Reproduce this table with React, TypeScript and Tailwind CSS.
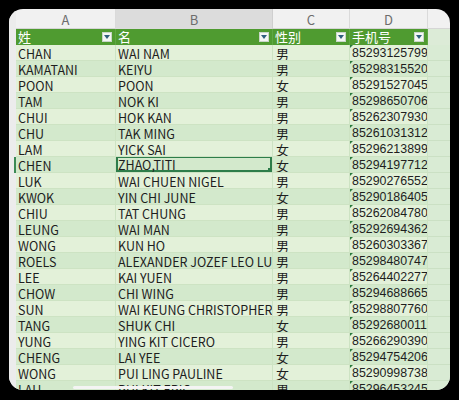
const rows: [string, string, string, string][] = [
  ["CHAN", "WAI NAM", "男", "85293125799"],
  ["KAMATANI", "KEIYU", "男", "85298315520"],
  ["POON", "POON", "女", "85291527045"],
  ["TAM", "NOK KI", "男", "85298650706"],
  ["CHUI", "HOK KAN", "男", "85262307930"],
  ["CHU", "TAK MING", "男", "85261031312"],
  ["LAM", "YICK SAI", "女", "85296213899"],
  ["CHEN", "ZHAO,TITI", "女", "85294197712"],
  ["LUK", "WAI CHUEN NIGEL", "男", "85290276552"],
  ["KWOK", "YIN CHI JUNE", "女", "85290186405"],
  ["CHIU", "TAT CHUNG", "男", "85262084780"],
  ["LEUNG", "WAI MAN", "男", "85292694362"],
  ["WONG", "KUN HO", "男", "85260303367"],
  ["ROELS", "ALEXANDER JOZEF LEO LUC", "男", "85298480747"],
  ["LEE", "KAI YUEN", "男", "85264402277"],
  ["CHOW", "CHI WING", "男", "85294688665"],
  ["SUN", "WAI KEUNG CHRISTOPHER", "男", "85298807760"],
  ["TANG", "SHUK CHI", "女", "85292680011"],
  ["YUNG", "YING KIT CICERO", "男", "85266290390"],
  ["CHENG", "LAI YEE", "女", "85294754206"],
  ["WONG", "PUI LING PAULINE", "女", "85290998738"],
  ["LAU", "PUI KIT ERIC", "男", "85296453245"],
];

const cols = "grid grid-cols-[7px_100px_157px_77px_78px_1fr]";

function FilterBtn() {
  return (
    <span className="absolute right-[3px] top-[3px] w-[10px] h-[10px] bg-[#f4f7f4] border border-[#c9d6c9] flex items-center justify-center">
      <span className="w-0 h-0 border-l-[3px] border-r-[3px] border-t-[4px] border-l-transparent border-r-transparent border-t-[#2f5f7d]" />
    </span>
  );
}

function HeadCell({ label }: { label: string }) {
  return (
    <div className="relative bg-[#4f9b30] text-white text-[13px] leading-[16px] pl-[2px] border-r border-[#5ea843] overflow-hidden">
      {label}
      <FilterBtn />
    </div>
  );
}

export default function App() {
  return (
    <div
      className="w-[459px] h-[400px] bg-black pt-[9px] pl-[9px]"
      style={{ fontFamily: '"Noto Sans CJK SC", "Liberation Sans", sans-serif' }}
    >
      <div className="relative w-[441px] h-[381px] rounded-[14px] overflow-hidden bg-[#f1f1f1]">
        {/* column letters */}
        <div className={`${cols} grid-rows-[20px] h-[20px] text-[13px] leading-[20px] text-[#6d6d6d] border-b border-[#d6d6d6]`}>
          <div className="bg-[#ececec]" />
          <div className="text-center pt-px border-r border-[#dadada]">A</div>
          <div className="text-center pt-px bg-[#dcdcdc] border-r border-[#cfcfcf]">B</div>
          <div className="text-center pt-px border-r border-[#dadada]">C</div>
          <div className="text-center pt-px border-r border-[#dadada]">D</div>
          <div />
        </div>

        {/* table header */}
        <div className={`${cols} grid-rows-[16px] h-[16px]`}>
          <div className="bg-[#ececec]" />
          <HeadCell label="姓" />
          <HeadCell label="名" />
          <HeadCell label="性别" />
          <HeadCell label="手机号" />
          <div className="bg-[#dcebd7]" />
        </div>

        {rows.map((r, i) => {
          const bg = i % 2 === 0 ? "bg-[#e3f1d9]" : "bg-[#d3e9cc]";
          const sel = i === 7;
          return (
            <div key={i} className={`${cols} grid-rows-[16px] h-[16px] text-[12.5px] leading-[15px] text-[#1e1e1e]`}>
              <div className="relative bg-[#ececec]">
                {sel && <span className="absolute right-0 top-0 bottom-0 w-[2px] bg-[#3c8a55]" />}
              </div>
              <div className={`${bg} pl-[2px] pt-px border-b border-r border-[#cde3c3] whitespace-nowrap overflow-hidden`}>{r[0]}</div>
              <div className={`relative ${bg} pl-[2px] ${sel ? "pt-0" : "pt-px"} border-b border-r border-[#cde3c3] whitespace-nowrap overflow-hidden`}>
                {sel && (
                  <>
                    <span className="absolute -top-px left-0 right-0 bottom-0 border-2 border-[#2e7d4a]" />
                    <span className="absolute right-0 bottom-0 w-[4px] h-[4px] bg-[#2e7d4a]" />
                  </>
                )}
                <span className="relative">{r[1]}</span>
              </div>
              <div className={`${bg} pl-[3px] pt-px text-[13px] border-b border-r border-[#cde3c3] overflow-hidden`}>{r[2]}</div>
              <div className={`relative ${bg} pl-[2px] pt-px text-[12.4px] font-['Liberation_Sans',sans-serif] border-b border-r border-[#cde3c3] whitespace-nowrap overflow-hidden`}>
                <span className="absolute left-0 top-0 w-0 h-0 border-t-[3px] border-r-[3px] border-t-[#2a7a3c] border-r-transparent" />
                {r[3]}
              </div>
              <div className="bg-[#d9ebd4] border-b border-[#cbe0c4]" />
            </div>
          );
        })}

        {/* scrollbar */}
        <span className="absolute left-[64px] bottom-[1px] w-[160px] h-[3px] rounded-full bg-[#f4f4f4]" />
      </div>
    </div>
  );
}
